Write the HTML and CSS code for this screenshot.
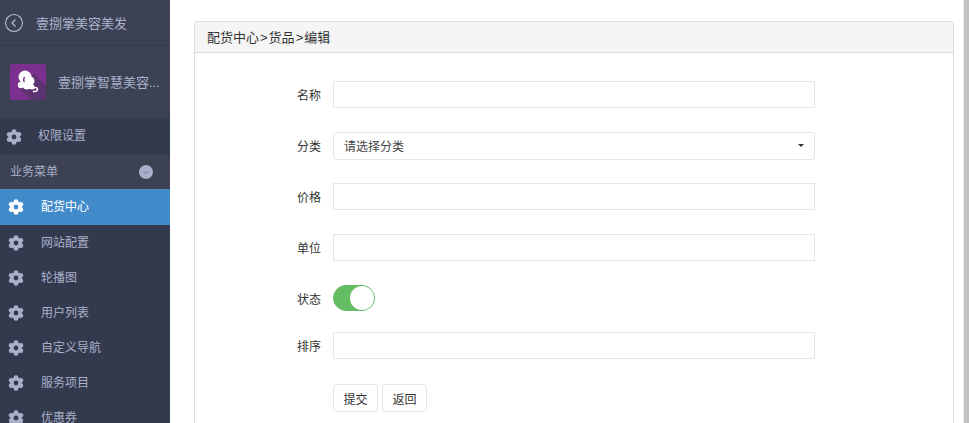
FILE: index.html
```html
<!DOCTYPE html>
<html lang="zh">
<head>
<meta charset="utf-8">
<title>配货中心</title>
<link rel="stylesheet" href="styles.css">
</head>
<body>
<svg class="defs" width="0" height="0"><defs>
<symbol id="gear" viewBox="0 0 16 16"><circle cx="8" cy="8" r="4.100" fill="none" stroke="currentColor" stroke-width="3.400"/><g fill="currentColor"><circle cx="8" cy="2.600" r="2.400"/><circle cx="8" cy="13.400" r="2.400"/><circle cx="12.800" cy="5.300" r="2.400"/><circle cx="12.800" cy="10.700" r="2.400"/><circle cx="3.200" cy="5.300" r="2.400"/><circle cx="3.200" cy="10.700" r="2.400"/></g></symbol>
</defs></svg>
<div class="app">
  <aside class="sidebar">
    <div class="top">
      <svg class="back" width="20" height="20" viewBox="0 0 20 20"><circle cx="10" cy="10" r="8.500" fill="none" stroke="#b4bdd6" stroke-width="1.100"/><path d="M11.500 6.500 8 10l3.500 3.500" fill="none" stroke="#b4bdd6" stroke-width="1.200"/></svg>
      <span class="top-title">壹捌掌美容美发</span>
    </div>
    <div class="brand">
      <svg class="logo" width="36" height="36" viewBox="0 0 36 36"><rect width="36" height="36" rx="2" fill="#7b2f8f"/><path d="M9 24 21 36h13a2 2 0 0 0 2-2V22L24 10z" fill="#5c3270"/><g fill="#fff"><circle cx="15" cy="13" r="6.500"/><circle cx="20" cy="17" r="4.500"/><circle cx="11" cy="21" r="3.200"/><circle cx="17" cy="21" r="4.500"/><circle cx="22" cy="23" r="2.500"/></g><path d="M14.500 13c-1 2-1.500 3.500 0 5" fill="none" stroke="#7b2f8f" stroke-width="1.400"/><path d="M23 25c1-2 4-2 4.500 0 .3 2-2 3-4.500 2.300" fill="none" stroke="#fff" stroke-width="1.500"/></svg>
      <span class="brand-name">壹捌掌智慧美容...</span>
    </div>
    <a class="perm"><svg class="gear"><use href="#gear"/></svg><span class="label-text perm-text">权限设置</span></a>
    <div class="section">
      <span class="label-text">业务菜单</span>
      <svg class="chev" width="14" height="14" viewBox="0 0 14 14"><circle cx="7" cy="7" r="7" fill="#a9b0c9"/><path d="M4.500 6 7 8.500 9.500 6" fill="none" stroke="#6d7491" stroke-width="1"/></svg>
    </div>
    <nav class="menu">
      <a class="item active"><svg class="gear"><use href="#gear"/></svg><span class="label-text">配货中心</span></a>
      <a class="item"><svg class="gear"><use href="#gear"/></svg><span class="label-text">网站配置</span></a>
      <a class="item"><svg class="gear"><use href="#gear"/></svg><span class="label-text">轮播图</span></a>
      <a class="item"><svg class="gear"><use href="#gear"/></svg><span class="label-text">用户列表</span></a>
      <a class="item"><svg class="gear"><use href="#gear"/></svg><span class="label-text">自定义导航</span></a>
      <a class="item"><svg class="gear"><use href="#gear"/></svg><span class="label-text">服务项目</span></a>
      <a class="item"><svg class="gear"><use href="#gear"/></svg><span class="label-text">优惠券</span></a>
    </nav>
  </aside>
  <main class="main">
    <section class="panel">
      <header class="panel-head">配货中心<span class="sep">&gt;</span>货品<span class="sep">&gt;</span>编辑</header>
      <form class="panel-body">
        <div class="row"><label>名称</label><input class="field" type="text"></div>
        <div class="row"><label>分类</label><div class="field select"><span>请选择分类</span><i class="caret"></i></div></div>
        <div class="row"><label>价格</label><input class="field" type="text"></div>
        <div class="row"><label>单位</label><input class="field" type="text"></div>
        <div class="row row-switch"><label>状态</label><div class="switch"><i class="knob"></i></div></div>
        <div class="row row-sort"><label>排序</label><input class="field" type="text"></div>
        <div class="actions"><button type="button" class="btn">提交</button><button type="button" class="btn">返回</button></div>
      </form>
    </section>
    <div class="scrollbar"></div>
  </main>
</div>
</body>
</html>
```
FILE: styles.css
```css
* { box-sizing: border-box; }
html, body { margin: 0; height: 423px; overflow: hidden; }
body { font-family: "Liberation Sans", "Noto Sans CJK SC", sans-serif; font-size: 12px; color: #333; background: #fff; }
.defs { position: absolute; }
.app { display: flex; height: 423px; overflow: hidden; }
.sidebar { width: 170px; flex: none; background: #343a4e; color: #a9b0c9; overflow: hidden; }
.top { height: 46px; display: flex; align-items: center; padding-left: 4px; background: #3c4254; border-bottom: 1px solid #353b4c; }
.back { margin-right: 12px; }
.top-title { font-size: 13px; color: #aab3cc; margin-bottom: 1px; }
.brand { height: 72px; display: flex; align-items: center; padding-left: 10px; background: #3c4254; }
.logo { margin-right: 12px; }
.brand-name { font-size: 13px; color: #aab3cc; margin-bottom: 2px; }
.label-text { margin-bottom: 3px; }
.perm-text { margin-bottom: 4px; }
.perm { height: 37px; display: flex; align-items: center; padding-left: 6px; background: #343a4e; }
.gear { width: 16px; height: 16px; color: #a9b0c9; flex: none; }
.perm .gear { margin-right: 16px; }
.section { height: 34px; display: flex; align-items: center; justify-content: space-between; padding: 0 17px 0 10px; background: #3c4254; }
.menu { display: flex; flex-direction: column; }
.item { height: 35px; display: flex; align-items: center; padding-left: 8px; }
.item .gear { margin-right: 17px; }
.item.active { height: 36px; background: #428bca; color: #fff; }
.item.active .gear { color: #fff; }
.main { flex: 1; position: relative; padding: 21px 15px 0 24px; }
.panel { border: 1px solid #ddd; border-radius: 3px; height: 500px; }
.panel-head { height: 31px; padding-left: 12px; line-height: 31px; font-size: 13px; background: #f5f5f5; border-bottom: 1px solid #ddd; }
.sep { margin: 0 1px; }
.panel-body { padding-top: 28px; }
.row { display: flex; align-items: center; height: 27px; margin-bottom: 24px; }
.row label { width: 138px; padding-right: 12px; text-align: right; font-size: 12px; color: #333; }
.field { width: 482px; height: 27px; border: 1px solid #e5e6e7; background: #fff; margin: 0; padding: 0 10px; font: inherit; color: #444; }
.select { display: flex; align-items: center; justify-content: space-between; border-radius: 3px; height: 28px; padding-right: 10px; }
.caret { width: 0; height: 0; border: 3px solid transparent; border-top-color: #333; border-bottom: 0; }
.switch { width: 42px; height: 26px; align-self: flex-start; border-radius: 13px; background: #64bd63; border: 1px solid #64bd63; position: relative; }
.knob { position: absolute; right: 0; top: 0; width: 24px; height: 24px; border-radius: 50%; background: #fff; }
.row-switch { margin-bottom: 20px; }
.row-sort { margin-bottom: 25px; }
.actions { display: flex; gap: 4px; padding-left: 138px; }
.btn { width: 45px; height: 28px; padding: 0; border: 1px solid #e7e7e7; border-radius: 3px; background: #fff; font: inherit; color: #333; }
.scrollbar { position: absolute; right: 0; top: 0; bottom: 0; width: 6px; background: #c1c1c1; border-left: 1px solid #eee; }
```
